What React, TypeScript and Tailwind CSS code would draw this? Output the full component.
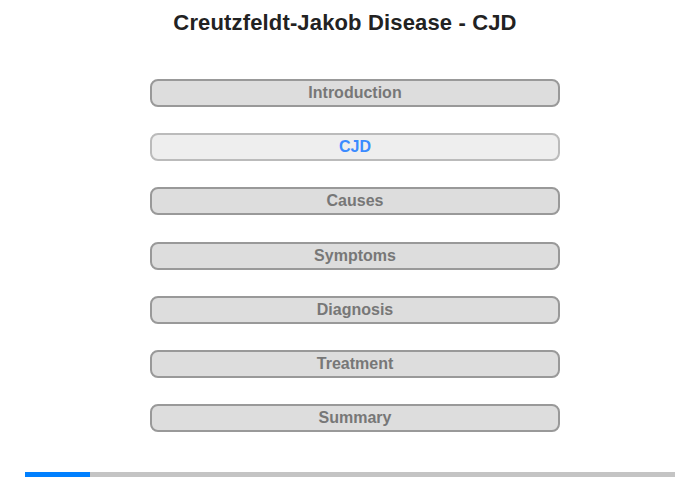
const sections = ['Introduction', 'CJD', 'Causes', 'Symptoms', 'Diagnosis', 'Treatment', 'Summary'];

export default function App() {
    const active = 'CJD';

    return (
        <div className="w-[700px] h-[480px] bg-white flex flex-col font-['Liberation_Sans',Arial,sans-serif]">
            <h1 className="pt-[8px] pr-[10px] text-center text-[22px] leading-[30px] tracking-[0.15px] font-bold text-[#222]">
                Creutzfeldt-Jakob Disease - CJD
            </h1>

            <div className="mt-[41px] flex flex-col gap-[26.2px] pl-[150px]">
                {sections.map((s) => (
                    <div
                        key={s}
                        className={
                            s === active
                                ? 'w-[410px] h-[28px] rounded-[8px] border-2 border-[#bbb] bg-[#eee] flex items-center justify-center text-[16px] font-bold text-[#3b8bff]'
                                : 'w-[410px] h-[28px] rounded-[8px] border-2 border-[#999] bg-[#ddd] flex items-center justify-center text-[16px] font-bold text-[#777]'
                        }
                    >
                        {s}
                    </div>
                ))}
            </div>

            {/* Progress */}
            <div className="mt-auto mb-[3px] mx-[25px] h-[5px] bg-[#c4c4c4] flex">
                <div className="w-[65px] h-full bg-[#0080ff]" />
            </div>
        </div>
    );
}
